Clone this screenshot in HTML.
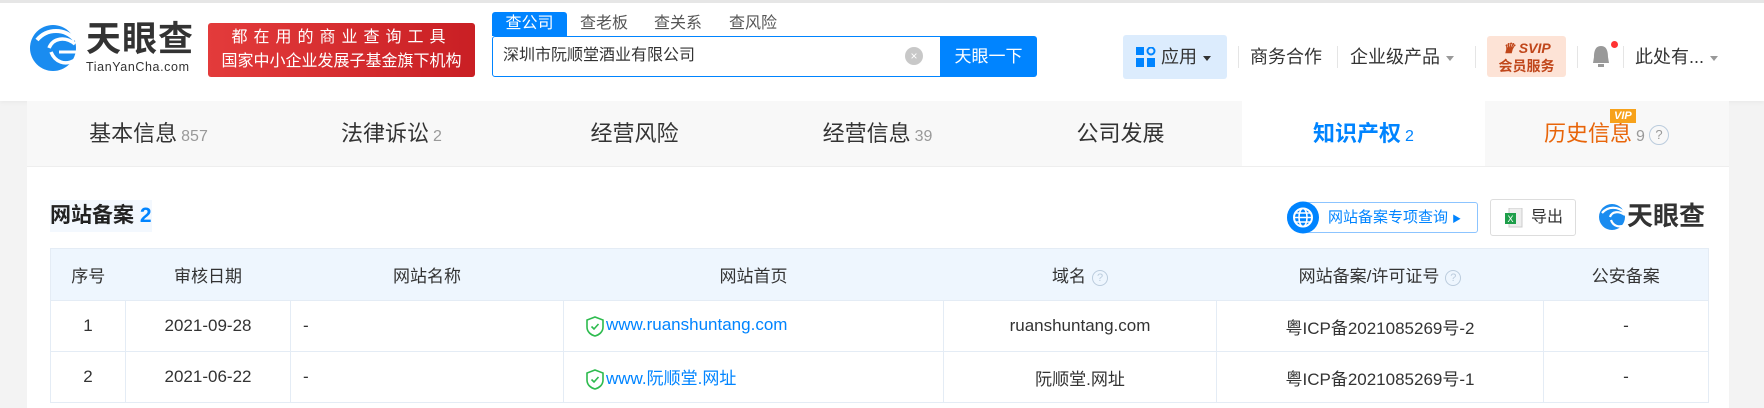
<!DOCTYPE html>
<html><head><meta charset="utf-8">
<style>
*{margin:0;padding:0;box-sizing:border-box}
body{width:1764px;height:408px;overflow:hidden;background:#f3f3f3;font-family:"Liberation Sans","Noto Sans CJK SC",sans-serif;color:#333;position:relative}
.a{position:absolute}
.hdr{left:0;top:0;width:1764px;height:101px;background:#fff;border-top:3px solid #e6e6e6;box-shadow:0 2px 4px rgba(0,0,0,.04)}
.red{left:208px;top:23px;width:267px;height:54px;border-radius:3px;background:linear-gradient(90deg,#e33b3b,#c91f24);color:#fff;font-size:16px;text-align:center;line-height:24px;padding-top:3px}
.tab{top:12px;height:24px;font-size:16px;color:#555;line-height:24px}
.inp{left:492px;top:36px;width:450px;height:41px;border:1px solid #0084ff;border-radius:3px 0 0 3px;background:#fff;font-size:16px;line-height:38px;padding-left:10px;color:#333}
.btn{left:940px;top:36px;width:97px;height:41px;background:#0084ff;color:#fff;font-size:17px;text-align:center;line-height:41px;border-radius:0 3px 3px 0}
.nav{top:44px;font-size:18px;color:#333;line-height:26px}
.caret{display:inline-block;width:0;height:0;border-left:4px solid transparent;border-right:4px solid transparent;border-top:5px solid #999;vertical-align:middle;margin-left:6px}
.sep{top:46px;width:1px;height:22px;background:#e5e5e5}
.panel{left:27px;top:101px;width:1702px;height:307px;background:#fff}
.tabs{left:27px;top:101px;width:1702px;height:66px;background:#f8f8f8;border-bottom:1px solid #eee;display:flex}
.tabs div{width:243px;text-align:center;line-height:66px;font-size:22px;color:#333}
.tabs span{font-size:16px;color:#999;margin-left:4px}
table{position:absolute;left:50px;top:248px;border-collapse:collapse;font-size:17px;color:#333}
td,th{border:1px solid #e4ecf5;text-align:center;font-weight:normal;height:51px;padding:0}
th{background:#eef6fe;height:52px;border-left:none;border-right:none}
th:first-child{border-left:1px solid #e4ecf5}th:last-child{border-right:1px solid #e4ecf5}
.q{display:inline-block;width:16px;height:16px;border:1px solid #bcd;border-radius:50%;font-size:11px;line-height:14px;color:#bcd;vertical-align:middle;margin-left:6px}
.lnk{color:#0084ff;text-align:left;padding-left:22px}
.l{text-align:left;padding-left:12px}
</style></head><body>
<div class="a hdr"></div>
<svg class="a" style="left:29px;top:22px" width="48" height="52" viewBox="0 0 48 52">
<circle cx="24" cy="26" r="23" fill="#1a8cf0"/>
<path d="M8 18 C18 6 36 6 46 18" stroke="#fff" stroke-width="4" fill="none"/>
<path d="M20 26 C24 16 36 14 46 22" stroke="#fff" stroke-width="3.5" fill="none"/>
<path d="M22 30 C26 40 36 44 46 38" stroke="#fff" stroke-width="3.5" fill="none"/>
<path d="M30 30 L48 30" stroke="#fff" stroke-width="3" fill="none"/>
</svg>
<div class="a" style="left:86px;top:20px;font-size:35px;font-weight:bold;color:#333;letter-spacing:1px;line-height:40px">天眼查</div>
<div class="a" style="left:86px;top:60px;font-size:12.5px;color:#333;letter-spacing:.6px">TianYanCha.com</div>
<div class="a red"><div style="letter-spacing:6px">都在用的商业查询工具</div><div>国家中小企业发展子基金旗下机构</div></div>
<div class="a tab" style="left:492px;width:75px;background:#0084ff;color:#fff;text-align:center;border-radius:3px 3px 0 0">查公司</div>
<div class="a tab" style="left:580px">查老板</div>
<div class="a tab" style="left:654px">查关系</div>
<div class="a tab" style="left:729px">查风险</div>
<div class="a inp">深圳市阮顺堂酒业有限公司</div>
<div class="a" style="left:905px;top:47px;width:18px;height:18px;border-radius:50%;background:#c8c8c8;color:#fff;font-size:12px;text-align:center;line-height:18px">×</div>
<div class="a btn">天眼一下</div>
<div class="a" style="left:1123px;top:35px;width:104px;height:44px;background:#dcecfd;border-radius:3px"></div>
<svg class="a" style="left:1136px;top:47px" width="20" height="20"><rect x="0" y="0" width="8" height="8" fill="#0084ff"/><rect x="0" y="11" width="8" height="9" fill="#0084ff"/><rect x="11" y="11" width="8" height="9" fill="#0084ff"/><circle cx="15" cy="4" r="3.5" fill="none" stroke="#0084ff" stroke-width="2"/></svg>
<div class="a nav" style="left:1161px">应用<span class="caret" style="border-top-color:#333"></span></div>
<div class="a sep" style="left:1238px"></div>
<div class="a nav" style="left:1250px">商务合作</div>
<div class="a sep" style="left:1337px"></div>
<div class="a nav" style="left:1350px">企业级产品<span class="caret"></span></div>
<div class="a sep" style="left:1475px"></div>
<div class="a" style="left:1487px;top:36px;width:79px;height:41px;background:#fde3d6;border-radius:3px;color:#c0461a;font-size:14px;font-weight:bold;text-align:center;line-height:18px;padding-top:3px"><div style="font-style:italic">♛ SVIP</div><div>会员服务</div></div>
<div class="a sep" style="left:1577px"></div>
<svg class="a" style="left:1590px;top:43px" width="22" height="26"><path d="M11 3 C5 3 4 9 4 14 L3 20 L19 20 L18 14 C18 9 17 3 11 3Z" fill="#999"/><rect x="8" y="21" width="6" height="3" fill="#999"/></svg>
<div class="a" style="left:1611px;top:41px;width:7px;height:7px;border-radius:50%;background:#f33"></div>
<div class="a sep" style="left:1623px"></div>
<div class="a nav" style="left:1635px">此处有...<span class="caret"></span></div>
<div class="a panel"></div>
<div class="a tabs">
<div>基本信息<span>857</span></div><div>法律诉讼<span>2</span></div><div>经营风险</div><div>经营信息<span>39</span></div><div>公司发展</div>
<div style="background:#fff;color:#0084ff;font-weight:bold">知识产权<span style="color:#0084ff;font-weight:normal">2</span></div>
<div style="color:#e8650a;position:relative">历史信息<span>9</span><span class="q" style="width:20px;height:20px;line-height:18px;font-size:13px">?</span><b style="position:absolute;left:125px;top:8px;background:#f7a21b;color:#fff;font-size:11px;line-height:12px;padding:1px 4px;font-style:italic">VIP</b></div>
</div>
<div class="a" style="left:50px;top:200px;height:32px;background:#f3f8fe;font-size:21px;font-weight:bold;line-height:32px;color:#222">网站备案 <span style="color:#0084ff">2</span></div>
<div class="a" style="left:1287px;top:202px;width:191px;height:31px;border:1px solid #8cc4ff;border-radius:16px 3px 3px 16px;font-size:15px;color:#0084ff;line-height:29px;padding-left:40px">网站备案专项查询 <span style="font-size:9px">▶</span></div>
<svg class="a" style="left:1286px;top:200px" width="34" height="35"><circle cx="17" cy="17.5" r="16" fill="#0084ff"/><circle cx="17" cy="17.5" r="9" fill="none" stroke="#fff" stroke-width="2"/><ellipse cx="17" cy="17.5" rx="4" ry="9" fill="none" stroke="#fff" stroke-width="1.6"/><path d="M8 17.5H26M9.5 13H24.5M9.5 22H24.5" stroke="#fff" stroke-width="1.4"/></svg>
<div class="a" style="left:1490px;top:199px;width:86px;height:37px;border:1px solid #ddd;border-radius:3px;font-size:16px;line-height:35px;padding-left:40px;color:#333">导出</div>
<svg class="a" style="left:1505px;top:208px" width="18" height="20"><rect x="4" y="0" width="13" height="19" fill="#eee" stroke="#ccc"/><rect x="0" y="5" width="11" height="11" fill="#1e9e4a"/><text x="2.5" y="14" font-size="9" fill="#fff" font-family="Liberation Sans">X</text></svg>
<svg class="a" style="left:1598px;top:203px" width="28" height="28"><circle cx="14" cy="14" r="13" fill="#1a8cf0"/><path d="M4 10 C10 3 20 3 27 10M12 14 C14 8 21 8 27 12M13 17 C15 23 21 25 27 22" stroke="#fff" stroke-width="2.2" fill="none"/></svg>
<div class="a" style="left:1627px;top:200px;font-size:26px;font-weight:bold;color:#333;line-height:32px">天眼查</div>
<table>
<tr><th style="width:75px">序号</th><th style="width:165px">审核日期</th><th style="width:273px">网站名称</th><th style="width:380px">网站首页</th><th style="width:273px">域名<span class="q">?</span></th><th style="width:327px">网站备案/许可证号<span class="q">?</span></th><th style="width:165px">公安备案</th></tr>
<tr><td>1</td><td>2021-09-28</td><td class="l">-</td><td class="lnk"><svg width="18" height="21" style="vertical-align:middle;margin-right:2px"><path d="M9 1 L17 4 L17 11 C17 16 13 19 9 20 C5 19 1 16 1 11 L1 4Z" fill="none" stroke="#2dbb4e" stroke-width="1.6"/><path d="M5.5 10.5 L8 13 L12.5 8" fill="none" stroke="#2dbb4e" stroke-width="1.6"/></svg>www.ruanshuntang.com</td><td>ruanshuntang.com</td><td>粤ICP备2021085269号-2</td><td>-</td></tr>
<tr><td>2</td><td>2021-06-22</td><td class="l">-</td><td class="lnk"><svg width="18" height="21" style="vertical-align:middle;margin-right:2px"><path d="M9 1 L17 4 L17 11 C17 16 13 19 9 20 C5 19 1 16 1 11 L1 4Z" fill="none" stroke="#2dbb4e" stroke-width="1.6"/><path d="M5.5 10.5 L8 13 L12.5 8" fill="none" stroke="#2dbb4e" stroke-width="1.6"/></svg>www.阮顺堂.网址</td><td>阮顺堂.网址</td><td>粤ICP备2021085269号-1</td><td>-</td></tr>
</table>
</body></html>
